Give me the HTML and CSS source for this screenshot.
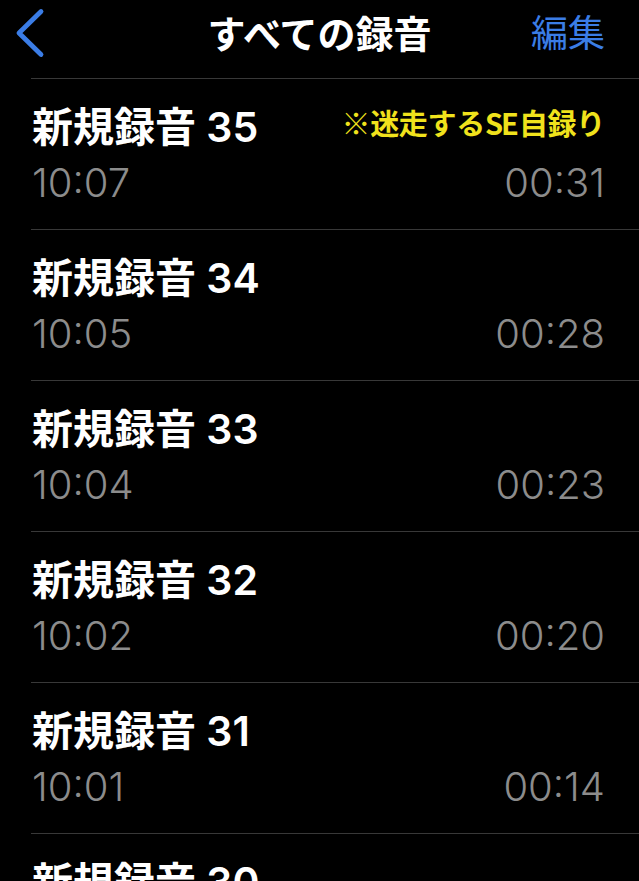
FILE: index.html
```html
<!DOCTYPE html>
<html lang="ja">
<head>
    <meta charset="UTF-8">
    <meta name="viewport" content="width=device-width, initial-scale=1.0">
    <title>すべての録音</title>
    <link rel="stylesheet" href="styles.css">
</head>
<body>
    <header class="nav-bar">
        <button class="back-btn" aria-label="戻る">
            <svg width="32" height="50" viewBox="0 0 32 50">
                <path d="M27 3.5 L5 25 L27 46.5" fill="none" stroke="#3b7de6" stroke-width="4.8" stroke-linecap="round" stroke-linejoin="round"/>
            </svg>
        </button>
        <h1 class="nav-title">すべての録音</h1>
        <button class="edit-btn">編集</button>
    </header>

    <ul class="recordings">
        <li class="recording">
            <div class="rec-top">
                <span class="rec-name">新規録音 35</span>
                <span class="rec-note">※迷走する<span class="se">SE</span>自録り</span>
            </div>
            <div class="rec-meta">
                <span>10:07</span>
                <span>00:31</span>
            </div>
        </li>
        <li class="recording">
            <div class="rec-top"><span class="rec-name">新規録音 34</span></div>
            <div class="rec-meta"><span>10:05</span><span>00:28</span></div>
        </li>
        <li class="recording">
            <div class="rec-top"><span class="rec-name">新規録音 33</span></div>
            <div class="rec-meta"><span>10:04</span><span>00:23</span></div>
        </li>
        <li class="recording">
            <div class="rec-top"><span class="rec-name">新規録音 32</span></div>
            <div class="rec-meta"><span>10:02</span><span>00:20</span></div>
        </li>
        <li class="recording">
            <div class="rec-top"><span class="rec-name">新規録音 31</span></div>
            <div class="rec-meta"><span>10:01</span><span>00:14</span></div>
        </li>
        <li class="recording">
            <div class="rec-top"><span class="rec-name">新規録音 30</span></div>
            <div class="rec-meta"><span>09:58</span><span>00:19</span></div>
        </li>
    </ul>
</body>
</html>
```

FILE: styles.css
```css
body {
    margin: 0;
    background: #000;
    color: #fff;
    font-family: Inter, "Noto Sans CJK JP", sans-serif;
    height: 881px;
    overflow: hidden;
}
.nav-bar {
    height: 78px;
    display: grid;
    grid-template-columns: 1fr auto 1fr;
    align-items: center;
}
.back-btn, .edit-btn {
    background: none;
    border: none;
    padding: 0;
    cursor: pointer;
    font-family: inherit;
}
.back-btn {
    justify-self: start;
    margin-left: 14px;
    margin-bottom: 12px;
    display: flex;
}
.nav-title {
    margin: 0 0 14px;
    font-family: "Noto Sans CJK JP", sans-serif;
    font-size: 38px;
    font-weight: 700;
    line-height: 48px;
}
.edit-btn {
    justify-self: end;
    margin-right: 34px;
    margin-bottom: 16px;
    color: #3b7de6;
    font-family: "Noto Sans CJK JP", sans-serif;
    font-size: 37px;
    font-weight: 400;
    line-height: 48px;
}
.recordings {
    list-style: none;
    margin: 0 0 0 31px;
    padding: 0;
    border-top: 1px solid #383838;
}
.recording {
    height: 150px;
    padding: 0 34px 0 1px;
    border-bottom: 1px solid #383838;
    display: flex;
    flex-direction: column;
}
.rec-top {
    display: flex;
    justify-content: space-between;
    align-items: center;
    margin-top: 24px;
    height: 48px;
}
.rec-name {
    font-size: 41px;
    font-weight: 600;
    line-height: 48px;
}
.rec-note {
    color: #f0e21c;
    font-family: "Noto Sans CJK JP", sans-serif;
    font-size: 29px;
    font-weight: 700;
    letter-spacing: -0.3px;
    margin-bottom: 10px;
}
.se {
    letter-spacing: -2px;
    margin-right: 2px;
}
.rec-meta {
    display: flex;
    justify-content: space-between;
    margin-top: 8px;
    color: #8c8c8c;
    font-size: 40px;
    font-weight: 300;
    line-height: 48px;
}
```
